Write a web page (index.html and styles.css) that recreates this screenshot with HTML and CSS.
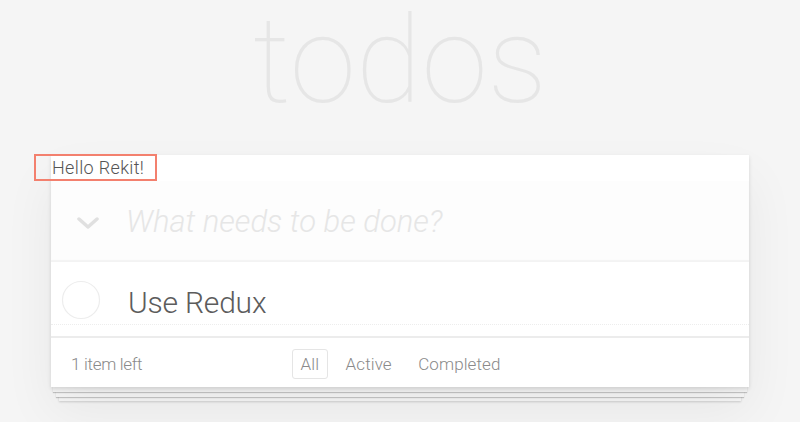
FILE: index.html
```html
<!DOCTYPE html>
<html lang="en">
<head>
<meta charset="utf-8">
<title>todos</title>
<link rel="stylesheet" href="styles.css">
</head>
<body>
<div class="app">
  <h1 class="title">todos</h1>
  <section class="card">
    <div class="hello-row"><span class="hello">Hello Rekit!</span></div>
    <header class="new-row">
      <span class="toggle-all"><svg width="22" height="12" viewBox="0 0 22 12"><path d="M2 2 L11 10 L20 2" fill="none" stroke="#e0e0e0" stroke-width="3.5" stroke-linecap="round" stroke-linejoin="round"/></svg></span>
      <span class="placeholder">What needs to be done?</span>
    </header>
    <ul class="list">
      <li class="item">
        <svg class="check" width="40" height="40" viewBox="0 0 40 40"><circle cx="20" cy="20" r="18.5" fill="none" stroke="#ededed" stroke-width="1.2"/></svg>
        <span class="label">Use Redux</span>
      </li>
    </ul>
    <footer class="footer">
      <span class="count">1 item left</span>
      <nav class="filters">
        <a class="filter selected">All</a>
        <a class="filter">Active</a>
        <a class="filter">Completed</a>
      </nav>
      <span></span>
    </footer>
  </section>
</div>
</body>
</html>
```

FILE: styles.css
```css
html, body {
  margin: 0;
  padding: 0;
}
body {
  background: #f5f5f5;
  font-family: Roboto, "Liberation Sans", Arial, sans-serif;
  color: #4d4d4d;
  height: 422px;
  overflow: hidden;
}
.app {
  width: 698px;
  margin: 0 auto;
}
.title {
  margin: 0;
  height: 155px;
  text-align: center;
  font-family: Roboto, "Liberation Sans", sans-serif;
  font-weight: 100;
  font-size: 120px;
  line-height: 122px;
  color: #e6e6e6;
  letter-spacing: 0;
}
.card {
  position: relative;
  background: #fff;
  box-shadow: 0 2px 4px rgba(0,0,0,0.12), 0 25px 50px rgba(0,0,0,0.06),
    0 7px 0 -2px #f7f7f7, 0 8px 1px -2px rgba(0,0,0,0.2),
    0 15px 0 -5px #f7f7f7, 0 16px 1px -5px rgba(0,0,0,0.2),
    0 22px 0 -8px #f7f7f7, 0 23px 2px -8px rgba(0,0,0,0.16);
}
.hello-row {
  height: 26px;
  display: flex;
  align-items: center;
}
.hello {
  display: inline-block;
  box-sizing: border-box;
  margin-left: -17px;
  padding-left: 16px;
  width: 123px;
  height: 27px;
  margin-top: -1px;
  border: 2px solid #f3806e;
  font-size: 18px;
  font-weight: 300;
  line-height: 24px;
  color: #555;
  letter-spacing: 0.35px;
  white-space: nowrap;
}
.new-row {
  height: 81px;
  box-sizing: border-box;
  display: flex;
  align-items: center;
  background: #fdfdfd;
  box-shadow: inset 0 -2px 1px rgba(0,0,0,0.04);
}
.toggle-all {
  width: 75px;
  display: flex;
  justify-content: center;
  margin-top: 2px;
}
.toggle-all svg {
  margin-left: -2px;
}
.placeholder {
  font-style: italic;
  font-weight: 300;
  font-size: 31px;
  color: #e6e6e6;
  letter-spacing: 0;
}
.list {
  list-style: none;
  margin: 0;
  padding: 0 0 11px 0;
}
.item {
  height: 63px;
  box-sizing: border-box;
  padding-top: 14px;
  border-bottom: 1px dotted #ededed;
  display: flex;
  align-items: center;
}
.check {
  margin-left: 10px;
}
.label {
  margin-left: 27px;
  margin-top: 4px;
  font-weight: 300;
  font-size: 30px;
  color: #5c5c5c;
  letter-spacing: -0.2px;
}
.footer {
  height: 51px;
  box-sizing: border-box;
  border-top: 2px solid #ececec;
  display: grid;
  grid-template-columns: 1fr auto 1fr;
  align-items: center;
  padding: 3px 20px 0;
  font-size: 17px;
  font-weight: 300;
  color: #8a8a8a;
}
.count {
  letter-spacing: -0.3px;
}
.filters {
  display: flex;
  gap: 8.5px;
  margin-left: 1px;
}
.filter {
  padding: 5px 8px;
  border: 1px solid transparent;
  border-radius: 3px;
  color: #8a8a8a;
  line-height: 18px;
  letter-spacing: 0.1px;
}
.filter.selected {
  border-color: #e5e5e5;
}
```
